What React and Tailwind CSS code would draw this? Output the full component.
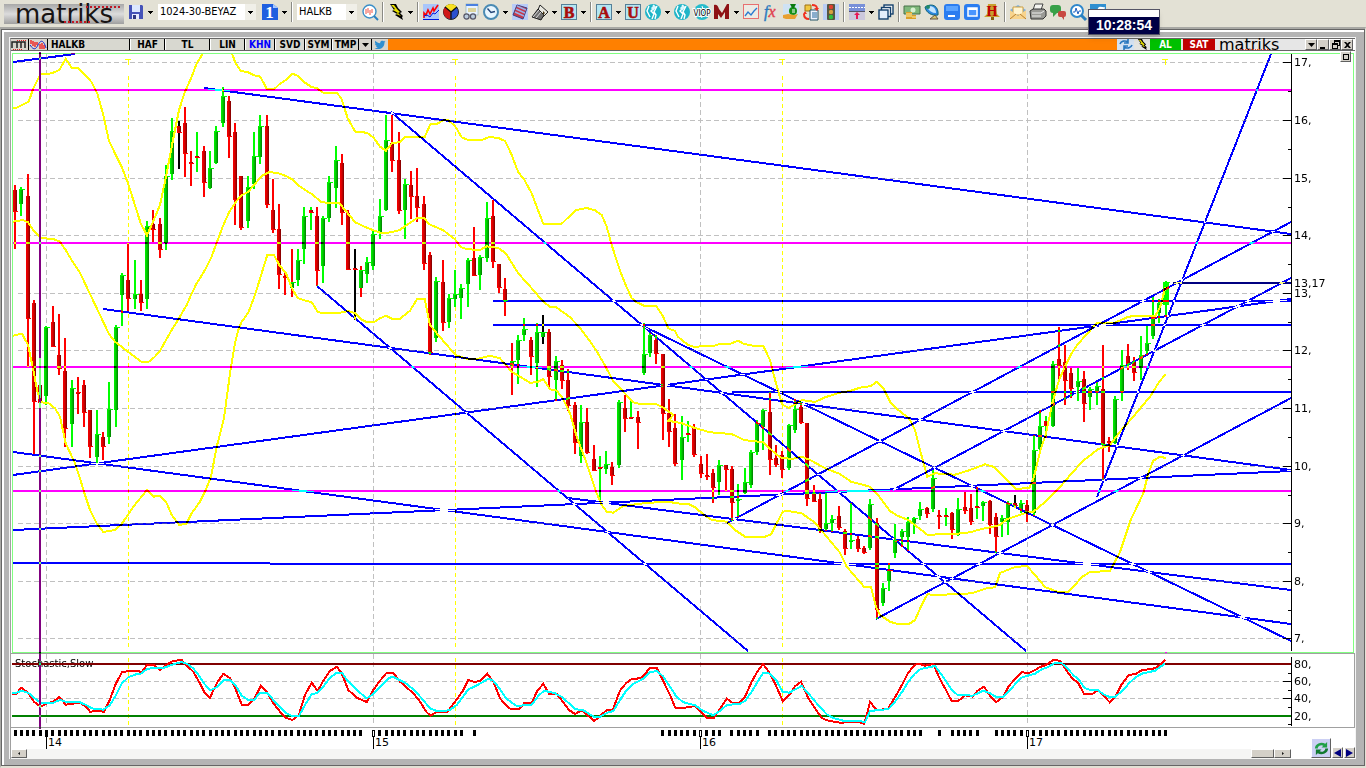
import React from "react";

/* Chart samples are stored on a grid three times finer than the pixel grid,
   relative to the origin of the block they belong to. */
const CANDLES = [
  [0, 50, `44 405 420 487 597 r;63 411 418 462 497 g;84 372 438 808 950 r;102 750 760 1057 1212 r;120 924 1005 1058 1074 r;139 828 830 1037 1065 g;159 768 816 892 892 r;177 792 915 958 975 r;195 864 963 1138 1192 r;216 990 1013 1122 1192 g;234 981 1025 1030 1092 r;252 990 1005 1090 1132 r;270 1080 1080 1190 1225 r;291 1080 1153 1222 1240 g;309 1147 1162 1190 1230 r;327 996 1078 1162 1182 g;348 826 830 1080 1132 g;366 670 676 735 828 g;384 580 690 748 783 r;404 630 732 746 777 g;423 690 732 758 783 r;441 513 528 746 777 g;459 480 522 540 576 r;480 504 522 600 624 r;498 345 378 580 600 g;516 204 244 372 390 g;537 213 228 248 357 k;555 171 219 313 380 r;573 303 337 342 408 r;591 246 319 323 366 q;612 288 303 398 441 r;630 303 353 414 417 g;648 228 244 339 342 g;669 111 137 218 231 g;687 138 153 262 324 r;705 219 246 450 525 r;723 378 378 533 539 r;744 378 412 513 533 g;762 246 319 402 417 g;780 195 229 321 342 g;801 195 228 464 474 r;819 387 480 540 549 r;837 462 538 674 716 r;855 669 679 683 735 r;876 597 695 713 741 p;894 597 630 690 708 g;912 471 497 597 641 g;932 471 480 490 540 q;951 471 498 664 708 r;969 498 503 648 699 g;988 378 396 503 516 g;1008 288 330 413 474 g`],
  [340, 50, `5 312 340 490 525 r;23 480 489 659 659 r;44 597 655 659 810 k;63 648 660 714 741 p;81 621 636 671 699 g;99 540 553 648 660 g;120 447 497 546 567 g;138 195 270 480 483 g;156 195 280 332 366 r;176 246 330 482 491 r;195 387 403 480 567 g;213 363 405 440 507 r;232 354 438 473 516 r;252 438 462 641 660 r;270 606 615 908 916 r;288 681 694 864 875 g;309 630 696 818 843 r;327 732 745 816 834 g;345 660 733 746 771 g;363 702 715 744 807 g;384 624 630 702 771 g;402 531 624 677 677 r;420 615 621 675 720 g;441 456 504 624 636 g;459 450 498 635 654 r;477 642 642 713 729 r;496 684 717 752 798 r;516 879 932 947 1035 p;534 855 870 930 1002 g;552 804 836 855 873 g;573 861 870 922 975 r;591 820 845 938 1010 g;609 795 845 862 882 b;628 837 846 982 1013 r;648 918 932 990 1053 g;666 930 945 992 1017 r;684 957 990 1067 1082 r;705 1056 1065 1178 1212 r;723 1065 1117 1218 1240 g;741 1074 1117 1210 1212 r;762 1185 1227 1262 1262 r;780 1218 1250 1253 1350 q;798 1203 1243 1258 1272 g;816 1236 1250 1278 1305 r;837 1050 1055 1245 1254 g;855 1035 1075 1108 1146 r;873 1050 1100 1103 1108 q;894 1083 1101 1118 1197 r;912 820 912 970 975 g;930 850 855 910 922 g;948 855 870 913 942 r;968 912 912 1093 1170 r;987 1047 1090 1145 1190 r;1005 1092 1135 1243 1247 r`],
  [660, 340, `66 228 292 360 420 g;84 243 280 284 306 q;102 252 262 344 350 r;122 348 372 402 414 r;141 342 404 410 420 r;159 387 400 443 488 r;177 360 375 426 465 g;197 375 376 390 453 r;216 378 388 490 543 r;234 432 478 482 530 g;254 384 427 459 462 g;273 330 337 435 443 g;291 240 248 337 345 g;309 207 210 260 330 g;329 155 216 361 405 r;348 315 353 375 381 r;366 333 346 391 414 r;386 252 256 384 390 g;405 177 207 270 279 g;423 186 201 248 252 r;441 249 250 476 498 r;462 435 458 486 486 r;480 459 477 572 578 r;498 459 550 567 573 g;516 525 536 550 577 g;537 497 528 563 570 r;555 567 573 628 645 r;573 490 600 604 628 g;594 588 597 627 636 r;612 618 625 639 642 r;630 477 492 624 630 g;650 534 550 810 837 r;669 729 745 790 798 g;687 670 690 723 752 g;705 552 600 640 654 g;726 567 573 590 620 g;744 531 545 590 633 g;762 531 534 550 582 g;781 486 508 527 540 g;801 501 503 523 533 r;819 390 415 506 516 g;837 509 526 530 567 r;858 504 524 530 558 q;876 516 519 570 597 r;894 473 507 584 588 g;915 456 500 512 523 r;933 462 504 546 554 r;951 440 498 503 536 q;969 483 487 497 543 g;990 480 483 554 581 r;1008 519 531 592 638 r`],
  [1000, 220, `6 885 893 905 950 g;25 843 850 905 945 g;45 825 850 857 865 k;63 840 850 868 878 g;81 840 855 880 905 r;102 645 690 880 888 g;120 570 617 687 695 g;138 588 603 617 654 q;158 423 432 617 620 g;177 321 417 439 486 r;195 375 426 484 555 r;213 444 459 507 533 r;234 444 484 500 543 g;252 453 477 553 606 r;270 500 508 530 570 g;291 487 498 515 555 g;309 375 508 675 780 r;327 651 663 668 696 r;346 528 537 669 673 g;366 390 435 517 543 g;384 372 408 431 450 r;402 411 425 460 483 r;423 348 405 443 480 g;441 318 369 393 405 g;459 231 290 347 357 g;477 237 250 280 308 g;498 183 186 255 290 w`],
];

const UPPER_A = [[0, 50, "39,175 48,174 66,165 86,155 100,115 122,72 145,72 160,68 178,60 197,26 215,53 234,54 258,77 275,97 292,130 310,195 327,273 345,310 365,350 384,400 404,463 422,520 441,556 460,513 480,465 498,380 515,290 537,180 555,125 573,85 590,40 609,10 620,-20"]];
const UPPER_B = [
  [0, 50, "688,-10 696,10 706,38 723,63 744,67 762,76 781,80 801,118 822,118 838,103 860,88 878,71 895,78 915,98 933,110 951,115 970,128 1010,128 1020,140"],
  [340, 50, "5,148 23,205 46,245 80,248 100,262 120,290 138,302 156,280 180,276 196,261 254,261 271,223 290,222 310,211 325,211 345,228 365,262 384,270 425,270 448,261 475,264 495,273 513,310 535,367 552,388 575,430 592,475 610,521 665,521 690,497 706,481 740,474 765,481 785,495 800,530 815,585 840,662 857,705 875,745 890,757 912,767 948,768 968,797 985,835 1005,843"],
  [660, 340, "54,-10 65,0 85,15 100,20 160,18 180,12 210,12 234,2 252,12 280,17 310,18 330,60 348,130 366,193 386,204 405,193 425,180 465,186 495,172 540,158 570,153 600,143 633,138 650,125 670,145 690,185 712,208 747,235 765,270 780,330 802,410 825,400 885,404 930,390 975,373 1000,380"],
  [1000, 220, "0,760 25,785 48,806 88,805 102,770 120,695 138,640 158,545 177,480 195,440 215,400 234,372 258,345 290,310 345,308 385,290 410,288 465,289 480,262 497,200"],
];
const MIDDLE = [
  [0, 50, "39,515 68,510 84,517 102,543 122,564 160,567 180,575 197,600 216,632 240,668 270,732 300,795 327,852 345,875 384,905 425,936 445,936 463,922 480,903 498,870 515,840 537,805 560,765 573,735 590,700 612,665 633,625 650,578 668,530 688,485 708,455 723,437 745,425 762,405 785,378 808,366 835,370 858,378 880,390 897,407 915,420 935,432 965,457 1018,460"],
  [340, 50, "5,468 23,490 46,517 80,533 120,548 145,548 178,541 200,525 232,504 252,504 268,523 310,541 345,568 363,592 384,598 420,600 440,589 475,594 497,610 535,670 575,715 610,755 630,770 648,771 690,802 715,828 740,860 768,900 797,950 820,995 850,1025 880,1057 900,1062 948,1062 970,1073 1000,1095"],
  [660, 340, "25,242 66,250 102,263 150,277 215,282 252,300 310,307 345,340 366,355 400,356 425,350 450,360 500,387 540,402 573,425 630,440 650,460 690,513 712,527 745,540 775,563 802,584 885,582 930,577 965,567 1000,560"],
  [1000, 220, "0,915 20,898 50,888 80,878 100,875 140,842 185,795 215,760 250,722 295,687 330,675 360,635 400,590 450,530 475,490 496,463"],
];
const LOWER = [
  [0, 50, "39,857 66,851 84,885 102,970 111,1020 122,1057 145,1059 165,1075 180,1100 197,1180 225,1240 240,1285 255,1335 270,1380 290,1420 310,1446 345,1440 365,1422 400,1370 441,1320 460,1340 480,1337 498,1355 515,1395 537,1424 558,1423 575,1390 600,1355 615,1325 633,1280 650,1190 672,1105 690,970 705,880 715,840 725,815 745,788 765,735 785,670 802,615 822,615 838,645 858,670 875,713 893,744 910,750 935,757 953,785 965,789 1018,789"],
  [340, 50, "5,787 25,783 46,790 63,808 80,816 102,817 120,805 138,797 155,806 180,806 210,782 232,746 254,746 270,825 290,850 330,896 350,917 380,926 415,926 450,917 480,925 515,965 570,998 590,997 610,987 630,1018 650,1022 668,1045 690,1090 710,1160 740,1240 770,1330 785,1365 800,1385 820,1388 850,1368 900,1361 970,1355 990,1355"],
  [660, 340, "45,490 85,492 105,502 130,523 155,540 200,545 225,570 255,590 315,590 333,583 350,550 368,515 385,513 425,520 465,548 500,590 540,638 560,680 590,715 612,740 633,742 648,800 660,825 690,845 712,852 747,852 765,840 785,795 802,763 825,765 900,762 935,760 980,745 1005,742 1015,715"],
  [1000, 220, "0,1059 45,1041 81,1038 105,1065 135,1101 174,1116 204,1116 225,1095 246,1071 270,1056 330,1053 360,996 392,900 430,820 445,760 460,722 480,710 497,714"],
];
const STOCH_K = [
  [0, 640, "36,163 48,162 64,143 84,158 102,185 122,200 142,190 160,185 178,171 197,194 240,188 258,200 270,215 290,213 312,215 327,185 348,130 366,97 384,93 415,93 425,97 441,75 462,76 480,90 498,76 518,63 545,60 558,75 580,95 597,125 612,155 630,173 650,130 670,101 690,115 706,145 725,194 745,194 762,178 782,138 800,155 820,190 840,215 858,233 877,240 896,226 915,165 935,128 953,153 970,122 990,93 1010,80 1025,100 1045,150 1070,173 1100,186 1120,150 1140,122 1160,98 1180,98 1200,125 1240,160 1260,185 1280,217 1292,227 1308,216"],
  [440, 640, "0,217 22,216 45,185 67,155 85,120 105,126 122,122 142,101 160,125 180,175 200,198 212,207 238,207 252,190 275,190 292,152 310,132 328,162 350,162 367,183 387,210 405,222 425,211 445,228 463,243 480,228 500,210 518,210 540,152 558,130 575,117 600,115 615,103 628,85 650,84 668,120 690,165 706,203 735,203 765,198 782,215 802,234 822,233 840,207 860,176 880,190 897,190 915,170 935,125 953,93 969,72 985,93 1005,130 1028,183 1050,162 1066,138 1083,125 1105,175 1125,205 1145,233 1160,241 1200,248 1255,245 1272,251 1280,225 1290,186 1310,210 1345,207"],
  [880, 640, "28,200 45,172 67,133 85,98 104,74 120,72 135,77 160,72 180,118 198,150 215,183 235,183 255,166 278,170 292,153 312,140 330,167 349,186 368,172 387,137 425,96 445,100 465,90 480,81 498,75 520,60 540,62 555,85 575,113 595,130 613,163 635,163 655,150 670,166 689,187 706,170 725,133 747,104 765,103 785,91 825,85 840,75 856,60"],
];
const STOCH_D = [
  [0, 640, "36,158 50,158 64,152 84,158 102,173 122,188 160,188 180,180 200,186 240,187 258,195 275,205 310,209 330,195 348,165 366,130 385,112 410,102 422,101 440,88 462,83 490,84 520,73 545,66 560,71 580,85 597,107 612,130 630,151 650,142 672,121 690,121 708,138 725,167 745,180 762,180 780,158 802,158 820,180 840,200 860,220 877,229 897,228 915,195 935,163 953,158 970,140 990,113 1010,98 1025,98 1045,125 1070,150 1100,175 1120,162 1145,135 1165,115 1178,110 1215,128 1240,148 1265,175 1290,205 1308,212"],
  [440, 640, "0,213 28,211 50,195 67,173 85,148 105,139 125,128 145,116 160,122 180,148 200,177 230,198 275,194 295,168 312,152 345,160 367,172 387,190 405,207 430,211 463,231 480,230 500,219 520,213 540,180 560,150 580,132 612,115 630,97 650,93 668,108 690,140 708,168 728,186 765,196 790,213 820,226 840,213 860,195 900,191 915,183 935,155 953,125 970,98 990,101 1010,123 1028,155 1048,158 1066,148 1085,138 1105,160 1130,190 1160,223 1180,234 1210,242 1255,242 1275,247 1290,213 1345,207"],
  [880, 640, "28,205 45,185 67,155 85,125 104,101 122,87 165,78 180,98 198,123 215,150 232,164 278,167 310,152 330,160 349,171 370,170 390,150 408,130 425,113 450,105 465,101 485,88 500,83 525,69 545,70 560,83 580,105 598,121 613,143 630,150 655,151 670,163 689,171 706,170 730,150 747,130 765,113 785,101 825,92 856,70"],
];

/* Trend lines, [x1, y1, x2, y2]. */
const TRENDS = [
  [13, 62, 75, 54], [204, 88, 1291, 234], [391, 112, 1026, 651], [317, 286, 748, 651],
  [103, 309, 1291, 470], [13, 475, 1291, 299], [13, 452, 1291, 624], [13, 530, 1291, 471],
  [13, 563, 270, 563], [270, 564, 1291, 564], [493, 301, 1291, 301], [493, 325, 1291, 325],
  [732, 392, 1291, 392], [643, 326, 1291, 641], [568, 498, 1291, 590], [727, 523, 1291, 222],
  [893, 490, 1291, 278], [876, 619, 1291, 398], [1097, 497, 1271, 54],
];
const LEVELS = [90, 243, 367, 491];
const YEARS = [[46, "14"], [373, "15"], [700, "16"], [1027, "17"]];
const PRICES = [[62, "17,"], [120, "16,"], [178, "15,"], [235, "14,"], [293, "13,"], [350, "12,"], [408, "11,"], [466, "10,"], [523, "9,"], [581, "8,"], [638, "7,"]];
const WEEK_RANGES = [[-5, 50], [53, 66], [68, 68], [98, 103], [105, 107], [109, 113], [115, 139], [142, 142], [144, 148], [151, 155], [157, 178]];

const WICK = { r: "#f00", g: "#0f0", k: "#000", q: "#0f0", p: "#f00", b: "#000", w: "#0f0" };
const BODY = { r: "url(#red)", g: "url(#green)", k: "url(#red)", q: "url(#red)", p: "url(#green)", b: "url(#green)", w: "#0f0" };
const CAP = { r: "#f00", g: "#0f0", k: "#f00", q: "#f00", p: "#0f0", b: "#0f0", w: "#0f0" };

const trace = (blocks) =>
  blocks
    .flatMap(([ox, oy, pts]) => pts.split(" ").map((p) => {
      const [x, y] = p.split(",").map(Number);
      return `${(ox + x / 3).toFixed(1)},${(oy + y / 3).toFixed(1)}`;
    }))
    .join(" ");

const candles = CANDLES.flatMap(([ox, oy, rows]) =>
  rows.split(";").map((row) => {
    const f = row.split(" ");
    const [x, h, t, b, l] = f.slice(0, 5).map(Number);
    const px = (v) => Math.round(oy + v / 3);
    return { x: Math.round(ox + x / 3), h: px(h), t: px(t), b: px(b), l: px(l), c: f[5] };
  })
);

const weeks = WEEK_RANGES.flatMap(([a, b]) => Array.from({ length: b - a + 1 }, (_, i) => Math.round(45 + (a + i) * 6.2885)));

function Chart() {
  return (
    <svg viewBox="11 51 1344 687" className="isolate block w-full bg-white" role="img" aria-label="HALKB">
      <defs>
        <linearGradient id="red"><stop offset="0" stopColor="#f80000" /><stop offset="0.5" stopColor="#d40000" /><stop offset="1" stopColor="#780000" /></linearGradient>
        <linearGradient id="green"><stop offset="0" stopColor="#00f400" /><stop offset="0.5" stopColor="#00c800" /><stop offset="1" stopColor="#007c00" /></linearGradient>
        <clipPath id="plot"><rect x="13" y="54" width="1278" height="597" /></clipPath>
      </defs>
      <g shapeRendering="crispEdges" fill="none">
        <rect x="11" y="51" width="1344" height="687" fill="#fff" />
        <g stroke="#c0c0c0" strokeDasharray="5 3">
          {PRICES.map(([y]) => <path key={y} d={`M18 ${y + 0.5}H1283`} />)}
          <path d="M18 681.5H1283M18 698.5H1283" />
          {YEARS.map(([x]) => <path key={x} d={`M${x + 0.5} 54V726`} />)}
        </g>
        <g stroke="#ff0">
          {[128, 455, 782].map((x) => <path key={x} d={`M${x + 0.5} 76V650M${x + 0.5} 658V725`} strokeDasharray="4 3" />)}
          {[128, 455, 782, 1165].map((x) => <path key={x} d={`M${x - 3} 59.5H${x + 3}M${x + 0.5} 60V65`} />)}
        </g>
        <path d="M12.5 652V53.5H1353.5V652.5H12" stroke="#80ff80" />
        <path d="M11 653.5H1354.5V727.5H11" stroke="#a0a0a0" />
      </g>
      <g clipPath="url(#plot)" shapeRendering="crispEdges">
        {candles.map((k) => (
          <g key={k.x}>
            <rect x={k.x - 1} y={k.h} width="2" height={Math.max(1, k.l - k.h)} fill={WICK[k.c]} />
            {k.c === "w"
              ? <rect x={k.x - 3} y={k.t} width="6" height={k.b - k.t} fill={BODY[k.c]} />
              : <rect x={k.x - 2} y={k.t} width="4" height={Math.max(2, k.b - k.t)} fill={BODY[k.c]} />}
            <rect x={k.x - (CAP[k.c] === "#f00" ? 2 : 1)} y={CAP[k.c] === "#f00" ? Math.max(k.t, k.b - 1) : k.t} width="5" height="1" fill={CAP[k.c]} />
          </g>
        ))}
        <g fill="none" stroke="#ff0" strokeWidth="2">
          {[UPPER_A, UPPER_B, MIDDLE, LOWER].map((band, i) => <polyline key={i} points={trace(band)} />)}
        </g>
      </g>
      <text x="15" y="667" className="fill-black font-['DejaVu_Sans',sans-serif] text-[10px]">Stochastic,Slow</text>
      <g shapeRendering="crispEdges" fill="none" strokeWidth="2">
        <path d="M12 664H1291" stroke="#800000" />
        <path d="M12 716H1291" stroke="#008000" />
        <polyline points={trace(STOCH_K)} stroke="#f00" />
        <polyline points={trace(STOCH_D)} stroke="#0ff" />
      </g>
      {/* Overlapping lines invert each other: each stroke holds the complement of its colour. */}
      {LEVELS.map((y) => <path key={y} d={`M13 ${y}H1291`} stroke="#0f0" strokeWidth="2" shapeRendering="crispEdges" className="mix-blend-difference" />)}
      {TRENDS.map((t) => <path key={t.join()} d={`M${t[0]} ${t[1]}L${t[2]} ${t[3]}`} stroke="#ff0" strokeWidth="2" shapeRendering="crispEdges" className="mix-blend-difference" />)}
      <path d="M1173 283H1291" stroke="#ffff7f" strokeWidth="2" shapeRendering="crispEdges" className="mix-blend-difference" />
      <path d="M40 52V729" stroke="#7fff7f" strokeWidth="2" shapeRendering="crispEdges" className="mix-blend-difference" />
      <g shapeRendering="crispEdges" stroke="#000" fill="none">
        <path d="M1291.5 54V651M1291.5 657V726" />
        {PRICES.map(([y]) => <path key={y} d={`M1283 ${y + 0.5}H1291`} />)}
        {PRICES.slice(0, 10).map(([y]) => <path key={y} d={`M1288 ${y + 29.5}H1291`} />)}
        <path d="M1283 681.5H1291M1283 698.5H1291M1288 673.5H1291M1288 690.5H1291M1288 707.5H1291M1288 724.5H1291" />
        {YEARS.map(([x]) => <path key={x} d={`M${x - 0.5} 730.5H${x + 1.5}V736.5H${x - 0.5}ZM${x + 0.5} 736V738`} />)}
      </g>
      <g shapeRendering="crispEdges">
        {weeks.map((x) => <rect key={x} x={x} y="730" width="3" height="6" />)}
        <rect x="1165" y="652" width="2" height="1" fill="#f0f" />
      </g>
      <g className="fill-black font-['DejaVu_Sans',sans-serif] text-[11px]">
        {PRICES.map(([y, s]) => <text key={y} x="1294" y={y + 4}>{s}</text>)}
        <text x="1294" y="287">13,17</text>
        <text x="1294" y="668">80,</text>
        <text x="1294" y="685">60,</text>
        <text x="1294" y="702">40,</text>
        <text x="1294" y="720">20,</text>
      </g>
    </svg>
  );
}

const Ic = ({ children }) => <svg viewBox="0 0 16 16" className="size-4 overflow-visible" aria-hidden="true">{children}</svg>;
const Down = () => <svg viewBox="0 0 5 3" className="h-[3px] w-[5px]" shapeRendering="crispEdges" aria-hidden="true"><path d="M0 0h5v1h-1v1h-1v1h-1v-1h-1v-1h-1z" /></svg>;
const Bolt = () => <><path d="M2 0h6l2 4 4 4-2 1 3 3-1 1 1 3-8-5 2-1-5-3 2-1z" fill="#000" /><path d="M3 1h3l3 4 3 3-2 1 3 3-5-2 2-1-5-3 2-1z" fill="#e8e000" /></>;
const Swirl = () => <><circle cx="8" cy="8" r="8" fill="#1fb5c8" /><path d="M8 1l2 2-4 4 3 3-2 5M12 2l-3 6 2 3-1 4M4 2L2 7l3 6" fill="none" stroke="#fff" strokeWidth="1.400" /><path d="M6 4l3-3 2 2-3 4z" fill="#d8f8ff" /></>;
const Letter = ({ c }) => <><rect x=".5" y=".5" width="15" height="15" fill="#b4e6f2" stroke="#557f98" /><text x="8" y="14" textAnchor="middle" fill="#a80c0c" stroke="#a80c0c" strokeWidth=".6" className="font-['Liberation_Serif',serif] text-[16px] font-black">{c}</text></>;
const Mag = () => <><circle cx="7.5" cy="7.5" r="6.5" fill="#fff" stroke="#3a8ec8" strokeWidth="1.400" /><path d="M12 12l4 4" stroke="#2a80c0" strokeWidth="2" /></>;
const Bird = () => <path d="M16 3.4l-1.700.6.9-1.600-1.900.7C12.300 2.200 8 2 8.200 6 5.500 6 3 4.700 1.200 2.600.2 4.400.6 6.200 2 7.200L.8 6.900c0 1.600 1.200 2.800 2.500 3.100l-1.200.1c.4 1.200 1.600 1.900 2.900 2C3.600 13 1.800 13.500 0 13.300c6 3.400 14.500.6 14.500-8.200z" fill="#2f8fd0" />;

const ICONS = {
  save: <><path d="M1 1h13l1 1v13H1z" fill="#4553b8" /><rect x="4" y="1" width="8" height="7" fill="#dce8ff" /><rect x="4" y="10" width="7" height="5" fill="#e8ecff" /><rect x="5" y="11" width="3" height="4" fill="#303880" /></>,
  one: <><path d="M0 0h11l5 4v12H0z" fill="#1f5fe0" /><path d="M11 0l5 4h-5z" fill="#a8c8ff" /><text x="7.500" y="14" textAnchor="middle" fill="#fff" className="font-['Liberation_Serif',serif] text-[17px] font-bold">1</text></>,
  search: <><Mag /><path d="M4 5v5M6 4v5M8 6v5M10 5v4" stroke="#f05040" /></>,
  bolt: <Bolt />,
  chart: <><rect width="16" height="16" fill="#a9c6fa" /><path d="M1 14V9l2 2 2-5 2 4 3-6 1 3 4-6" fill="none" stroke="#f00" strokeWidth="1.600" /><path d="M0 15.500h16M1 12l3-1 3 2 3-4 2 1 4-4" fill="none" stroke="#0018e0" /></>,
  pie: <><circle cx="8" cy="8" r="7.500" fill="#2a50d0" stroke="#222" /><path d="M8 8L2 3a7.500 7.500 0 0 1 12 0z" fill="#f8e020" /><path d="M8 8L2 3a7.500 7.500 0 0 0 5 12z" fill="#d01818" /><path d="M8 8L2 3M8 8l6-5M8 8v7" stroke="#111" strokeWidth="1.300" /></>,
  glasses: <><rect x="3" width="12" height="11" fill="#e8f2ff" stroke="#8aa" strokeWidth=".6" /><path d="M3 1h12" stroke="#4a80e0" strokeWidth="2" /><path d="M5 5h8M5 7h8" stroke="#d0b838" /><circle cx="3.500" cy="12.500" r="2.600" fill="#bcd" stroke="#556" strokeWidth="1.200" /><circle cx="10" cy="12.500" r="2.600" fill="#bcd" stroke="#556" strokeWidth="1.200" /></>,
  clock: <><circle cx="8" cy="8" r="7" fill="#e8f6ff" stroke="#4a8bb4" strokeWidth="2" /><path d="M4.500 4.500L8 8.500l4-1" fill="none" stroke="#247" strokeWidth="1.400" /></>,
  book: <><rect width="16" height="16" fill="#b8ccf8" /><path d="M5 1l10 3-4 11-10-4z" fill="#c83848" stroke="#404080" /><path d="M4 5l9 4M3 8l9 4M5 2l9 4" stroke="#98b0e8" strokeWidth="1.400" /></>,
  tag: <><path d="M8 1l8 7-7 7-6-2z" fill="#e8e8e0" stroke="#222" /><path d="M0 13l6-8 6 6-3 5z" fill="#707070" stroke="#222" /><path d="M1 13l6-7M4 14l5-6" stroke="#ddd" /><path d="M11 7l2 2-2 2z" fill="#431" /></>,
  B: <Letter c="B" />, A: <Letter c="A" />, U: <Letter c="U" />,
  swirl: <Swirl />,
  viop: <><circle cx="8" cy="8" r="8" fill="#27bccc" /><path d="M8 2l1 3-3 4 2 5" fill="none" stroke="#fff" /><text x="8" y="12" textAnchor="middle" stroke="#fff" strokeWidth="2" paintOrder="stroke" className="font-['DejaVu_Sans_Condensed','DejaVu_Sans',sans-serif] text-[8px]">VIOP</text></>,
  M: <path d="M0 1c2-1 4 0 5 4l3 4 5-9h2v15h-4V8l-4 6-3-4v5H0z" fill="#8e1114" />,
  line: <><rect x=".5" y=".5" width="15" height="14" fill="#ecebe4" stroke="#e87070" /><path d="M2 12l3-4 3 3 3-4 3-3" fill="none" stroke="#2a7ad0" strokeWidth="1.300" /></>,
  fx: <text x="1" y="13" className="font-['Liberation_Serif',serif] text-[16px] italic"><tspan fill="#2c7cc0" stroke="#2c7cc0" strokeWidth=".4">f</tspan><tspan fill="#e04050" stroke="#e04050" strokeWidth=".4">x</tspan></text>,
  hand: <><rect width="16" height="11" fill="#cfe2f4" /><circle cx="10" cy="7" r="4" fill="#159018" /><path d="M7 0h6l-2 4H9z" fill="#0b7a10" /><path d="M0 11l5-1 6 1 4-1-3 5H3l-3-1z" fill="#e8a030" /><path d="M9 6h3M9 8h3" stroke="#fff" /></>,
  swap: <><path d="M2 1h6v6H2z" fill="#f0c840" stroke="#a07010" /><path d="M7 6h8v10H7z" fill="#eef4ff" stroke="#256" /><path d="M9 9h5M9 11h5M9 13h5" stroke="#269" /><path d="M9 1c4 0 5 1 5 4M6 15c-4 0-5-2-5-5" fill="none" stroke="#f03020" strokeWidth="2" /><path d="M11 4h5l-2 3zM0 10h4L2 7z" fill="#f03020" /></>,
  light: <><rect width="16" height="16" fill="#b9cdf4" /><rect x="4" y="0" width="8" height="16" rx="1" fill="#565640" /><circle cx="8" cy="3" r="2.200" fill="#e04030" /><circle cx="8" cy="8" r="2.200" fill="#d8a040" /><circle cx="8" cy="13" r="2.200" fill="#30c040" /></>,
  rows: <><rect width="16" height="16" fill="#ccc8dc" /><rect width="16" height="7" fill="#7890d8" /><path d="M0 3.500h16" stroke="#fff" strokeDasharray="2 1" /><path d="M0 7.500h16" stroke="#556" /><path d="M8 8l3 3H9v4H7v-4H5z" fill="#e81858" /></>,
  stack: <g fill="#fff" stroke="#14406c" strokeWidth="1.400"><rect x="6" y="1" width="9" height="9" /><rect x="3.500" y="3.500" width="9" height="9" /><rect x="1" y="6" width="9" height="9" fill="#e4eefa" /></g>,
  cash: <><path d="M0 2h16v8H0z" fill="#7fb87a" stroke="#487048" /><circle cx="9" cy="6" r="2.500" fill="#d8f0d0" /><path d="M2 8h6v7H2zM8 11h4v4H8z" fill="#dca028" /><path d="M2 10h6M2 12h6M8 13h4" stroke="#fff0a0" /></>,
  dish: <><path d="M1 3c8-5 14 0 13 8C8 12 2 9 1 3z" fill="#2f88e0" stroke="#167" /><path d="M3 3c5-2 9 1 9 6-4 0-7-2-9-6z" fill="#c4e6ff" /><circle cx="4" cy="3" r="2" fill="#286" /><path d="M6 15h8l-3-4z" fill="#d8c870" stroke="#654" /></>,
  min: <><rect width="16" height="16" rx="3" fill="#2b7df0" /><path d="M2 2h12v5H2z" fill="#5aa4ff" /><path d="M4 12h7" stroke="#fff" strokeWidth="2" /></>,
  win: <><rect width="16" height="16" rx="3" fill="#2b7df0" /><rect x="4" y="4" width="9" height="8" fill="#4a96ff" stroke="#fff" strokeWidth="1.500" /><path d="M4 5h9" stroke="#fff" strokeWidth="2" /></>,
  bell: <><path d="M4 0h8l1 10 3 3H0l3-3z" fill="#c8a030" /><path d="M7 13h3v3H7z" fill="#876010" /><text x="8" y="12" textAnchor="middle" fill="#c00000" className="font-['Liberation_Serif',serif] text-[14px] font-bold">H</text></>,
  mail: <><path d="M0 6l8-5 8 5v9H0z" fill="#78b0e8" /><path d="M3 3h10v8H3z" fill="#fff4d0" stroke="#d0a040" /><path d="M0 6l8 6 8-6v9H0z" fill="#f8d48c" /><path d="M0 15l6-5M16 15l-6-5" stroke="#b88030" /></>,
  print: <><path d="M5 0h8l-2 6H3z" fill="#f4f4f0" stroke="#444" /><path d="M0 7l3-2h11l2 2v5l-3 3H1z" fill="#9a9a96" stroke="#333" /><path d="M2 9h9l3-2M2 12h9" stroke="#eee" fill="none" /></>,
  chat: <><rect y="1" width="11" height="8" rx="3" fill="#38a048" /><path d="M3 8v5l4-4" fill="#38a048" /><rect x="8" y="7" width="8" height="6" rx="2" fill="#c84840" /><path d="M11 12l3 4v-4" fill="#c84840" /></>,
  zoom: <><circle cx="7" cy="7" r="6" fill="#fff" stroke="#2f88cc" strokeWidth="2" /><path d="M11 11l5 5" stroke="#2a80c0" strokeWidth="3" /><path d="M3 8h2l1-4 2 6 1-3h2" fill="none" stroke="#2060c0" /></>,
  bird: <><rect width="16" height="16" fill="#2f8fd0" /><path d="M2 5c3 3 6 1 6-1 2-3 5 0 7-1-1 8-8 11-13 7 2 0 3-1 0-5z" fill="#fff" /></>,
};

const IconButton = ({ name }) => <button type="button" aria-label={name} className="flex h-5 w-5 shrink-0 items-center justify-center"><Ic>{ICONS[name]}</Ic></button>;
const Caret = () => <button type="button" aria-label="menu" className="flex h-5 w-[9px] shrink-0 items-center justify-center"><Down /></button>;
const Sep = () => <span className="flex h-5 w-[6px] shrink-0 justify-center"><span className="w-[2px] border-r border-white bg-[#8a8a84]" /></span>;

function Combo({ value, label, wide }) {
  return (
    <span className={`flex h-4 shrink-0 items-center bg-white ${wide ? "w-[98px]" : "w-[60px]"}`}>
      <select aria-label={label} defaultValue={value} className="h-4 min-w-0 flex-1 appearance-none bg-white pl-[2px] text-[11px] leading-4 outline-none">
        <option>{value}</option>
      </select>
      <span className="flex w-[11px] justify-center self-stretch bg-[#f0efe8] pt-[7px]"><Down /></span>
    </span>
  );
}

const TOOLS = "bolt ^ | chart pie glasses clock ^ book tag ^ B ^ | A ^ U swirl ^ swirl viop M ^ line fx hand swap light | rows ^ stack | cash dish min win bell | mail print chat zoom bird".split(" ");

function Toolbar() {
  return (
    <header className="flex h-[27px] items-start bg-[#e3e1d5] pt-[2px] pl-1">
      <div className="relative mt-[2px] flex h-5 w-[120px] shrink-0 items-center justify-center bg-linear-to-b from-[#a8a8a8] via-[#dcdcdc] to-[#a0a0a0]">
        <span className="font-['DejaVu_Sans',sans-serif] text-[26px] leading-5 text-[#181414]">matriks</span>
        <svg viewBox="0 0 120 20" className="absolute inset-0 h-5 w-[120px]" shapeRendering="crispEdges" aria-hidden="true">
          <path d="M82 3h34M60 18h26" stroke="#c01824" strokeWidth="2" strokeDasharray="2 2" />
        </svg>
      </div>
      <div className="flex h-5 items-center pl-[2px]">
        <IconButton name="save" /><Caret />
        <span className="w-[3px]" />
        <Combo value="1024-30-BEYAZ" label="Sayfa" wide />
        <span className="w-1" />
        <IconButton name="one" /><Caret />
        <Sep />
        <span className="w-[2px]" />
        <Combo value="HALKB" label="Sembol" />
        <span className="w-[3px]" />
        <IconButton name="search" />
        <Sep />
        {TOOLS.map((t, i) => (t === "^" ? <Caret key={i} /> : t === "|" ? <Sep key={i} /> : <IconButton key={i} name={t} />))}
      </div>
    </header>
  );
}

const TABS = [["HAF", "w-[35px]"], ["TL", "w-[45px]"], ["LIN", "w-[35px]"], ["KHN", "w-[30px]"], ["SVD", "w-[30px]"], ["SYM", "w-[27px]"], ["TMP", "w-[27px]"]];
const raised = "border border-t-white border-l-white border-r-[#606060] border-b-[#606060] bg-[#d4d0c8]";

function TitleBar() {
  return (
    <div className="flex h-[11px] items-stretch bg-[#ff8000] text-[10px] leading-[11px] font-bold text-black">
      <button type="button" aria-label="matriks" className="w-[18px] border-r border-black bg-[#d8d4cc]">
        <svg viewBox="0 0 17 11" className="h-[11px] w-[17px]" aria-hidden="true"><path d="M1 9V3h13v6M6 3v6M10 3v6" fill="none" stroke="#222" strokeWidth="1.500" /><path d="M6 1.500h9M2 10.500h9" stroke="#e02020" strokeDasharray="1 1" /></svg>
      </button>
      <button type="button" aria-label="indicators" className="w-[19px] border-r border-black bg-[#d8d4cc]">
        <svg viewBox="0 0 18 11" className="h-[11px] w-[18px]" aria-hidden="true"><path d="M2 1v4M4 2v5M6 3v5M8 3v3M11 5v5M13 4v6M15 6v4" stroke="#f02020" strokeWidth="1.400" /><path d="M1 6c4 6 6 4 8 0s5-7 8 3" fill="none" stroke="#1020d0" /></svg>
      </button>
      <button type="button" className="w-[82px] border-r border-black bg-[#d8d8d0] pl-[3px] text-left">HALKB</button>
      {TABS.map(([s, w]) => <button key={s} type="button" className={`${w} shrink-0 border-r border-l border-r-black border-l-white bg-[#d8d8d0] ${s === "KHN" ? "text-[#0000ff]" : ""}`}>{s}</button>)}
      <button type="button" aria-label="more" className="flex w-[13px] items-center justify-center border-r border-black bg-[#d8d4cc]"><svg viewBox="0 0 7 4" className="h-1 w-[7px]" aria-hidden="true"><path d="M0 0h7L3.500 4z" /></svg></button>
      <button type="button" aria-label="twitter" className="flex w-4 items-center justify-center bg-[#d8d4cc]"><svg viewBox="0 0 16 16" className="h-[11px] w-3" aria-hidden="true"><Bird /></svg></button>
      <span className="flex-1" />
      <button type="button" aria-label="sync" className="flex w-[17px] items-center justify-center bg-[#d4e2f2]"><svg viewBox="0 0 16 11" className="h-[11px] w-4" fill="none" stroke="#2878c0" strokeWidth="1.600" aria-hidden="true"><path d="M2 5c1-3 5-4 8-2M10 0v4H6M14 6c-1 3-5 4-8 2M6 11V7h4" /></svg></button>
      <button type="button" aria-label="alarm" className="flex w-4 items-center justify-center bg-[#e4e4e0]"><svg viewBox="0 0 16 16" className="h-[11px] w-3" aria-hidden="true"><Bolt /></svg></button>
      <button type="button" className="w-[33px] border-r-2 border-[#e4e4e0] bg-[#00c000] text-white">AL</button>
      <button type="button" className="w-8 bg-[#c00000] text-white">SAT</button>
      <span className="relative flex w-[90px] items-center justify-start bg-[#e6e6e6] pl-1 font-['DejaVu_Sans',sans-serif] text-[16px] leading-[11px] font-normal">
        matriks
        <svg viewBox="0 0 90 11" className="absolute inset-0 h-[11px] w-[90px]" aria-hidden="true"><path d="M22 10.500h32" stroke="#f04020" strokeDasharray="1 1" /></svg>
      </span>
      {[["menu", "M1 3h7L4.500 7z"], ["minimize", "M1 7h5v2H1z"], ["restore", "M3 0h6v6H7V5h1V2H4v1H3zM1 3h6v6H1zM2 5v3h4V5z"], ["close", "M1 2h2l1.500 1.500L6 2h2L5.500 5 8 8H6L4.500 6.500 3 8H1l2.500-3z"]].map(([n, d]) => (
        <button key={n} type="button" aria-label={n} className={`flex w-3 items-center justify-center ${raised}`}><svg viewBox="0 0 9 9" className="size-[9px]" aria-hidden="true"><path d={d} fillRule="evenodd" /></svg></button>
      ))}
      <span className="w-[2px] bg-white" />
    </div>
  );
}

function Footer() {
  return (
    <div className="flex h-[21px] bg-white">
      <div className="flex flex-1 flex-col">
        <svg viewBox="11 738 1280 11" className="block h-[11px] w-full" aria-hidden="true">
          {YEARS.map(([x, s]) => (
            <g key={x}>
              <path d={`M${x + 0.5} 738V749`} stroke="#000" shapeRendering="crispEdges" />
              <text x={x + 2} y="746" className="font-['DejaVu_Sans',sans-serif] text-[11px]">{s}</text>
            </g>
          ))}
        </svg>
        <div className="flex h-[10px] items-start bg-[#f5f5f4]">
          <button type="button" aria-label="left" className={`flex h-[9px] w-4 items-center justify-center ${raised}`}><svg viewBox="0 0 3 5" className="h-[3px] w-[2px]" aria-hidden="true"><path d="M3 0v5L0 2.500z" /></svg></button>
          <span className="flex-1" />
          <span className={`h-[9px] w-[23px] ${raised}`} />
          <button type="button" aria-label="right" className={`flex h-[9px] w-[17px] items-center justify-center ${raised}`}><svg viewBox="0 0 3 5" className="h-[3px] w-[2px]" aria-hidden="true"><path d="M0 0v5l3-2.500z" /></svg></button>
        </div>
      </div>
      <div className="flex w-16 items-end justify-end gap-px pb-px">
        <button type="button" aria-label="refresh" className="flex h-5 w-5 items-center justify-center border border-t-white border-l-white border-r-[#606060] border-b-[#606060] bg-[#ccd0f4]">
          <svg viewBox="0 0 16 16" className="size-[15px]" aria-hidden="true"><path d="M1 8a7 6 0 0 1 11-5l2-2v6H8l2-2a4 3 0 0 0-6 3z" fill="#20a048" /><path d="M15 8a7 6 0 0 1-11 5l-2 2V9h6l-2 2a4 3 0 0 0 6-3z" fill="#127a30" /></svg>
        </button>
        <button type="button" aria-label="previous" className={`flex size-[11px] items-center justify-center ${raised}`}><svg viewBox="0 0 7 8" className="h-2 w-[7px]" aria-hidden="true"><path d="M7 0v8L0 4z" fill="#000080" /></svg></button>
        <button type="button" aria-label="next" className={`flex size-[11px] items-center justify-center ${raised}`}><svg viewBox="0 0 7 8" className="h-2 w-[7px]" aria-hidden="true"><path d="M0 0v8l7-4z" fill="#000080" /></svg></button>
      </div>
    </div>
  );
}

export default function App() {
  return (
    <div className="relative min-h-screen bg-[#e3e1d5] font-['DejaVu_Sans_Condensed','DejaVu_Sans',sans-serif] text-black">
      <Toolbar />
      <main className="border-t-2 border-r border-b-2 border-l border-t-[#a8a8a4] border-r-[#e3e1d5] border-b-[#e3e1d5] border-l-[#a8a8a4]">
        <div className="border border-[#666]">
          <div className="border-t-2 border-l-2 border-white bg-[#b4b4b4] pt-[5px] pr-2 pb-[6px] pl-[5px]">
            <section className="border-t border-r border-l border-[#f4f4f4]">
              <div className="border-t border-l border-t-[#666] border-l-[#a0a0a0]">
                <div className="border-b border-[#666]"><TitleBar /></div>
                <div className="relative">
                  <Chart />
                  <button type="button" aria-label="panel" className={`absolute top-0 right-1 flex size-[11px] items-center justify-center ${raised}`}><span className="size-[6px] border border-black" /></button>
                </div>
                <Footer />
              </div>
            </section>
          </div>
        </div>
      </main>
      <div className="absolute top-[9px] left-[1088px] flex w-[72px] flex-col border border-[#556] shadow-md">
        <span className="h-[7px] bg-white" />
        <time className="bg-[#000045] text-center font-['Liberation_Sans',sans-serif] text-[14px] leading-[17px] font-bold text-white">10:28:54</time>
      </div>
    </div>
  );
}
